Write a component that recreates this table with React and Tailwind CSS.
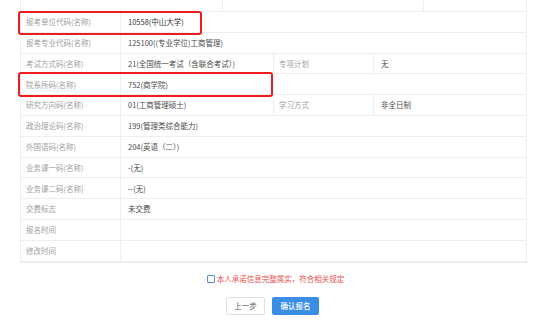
import React from "react";

const rows = [
  { label: "报考单位代码(名称)", value: "10558(中山大学)", strong: true },
  { label: "报考专业代码(名称)", value: "125100((专业学位)工商管理)" },
  {
    label: "考试方式码(名称)",
    value: "21(全国统一考试（含联合考试）)",
    label2: "专项计划",
    value2: "无",
  },
  { label: "院系所码(名称)", value: "752(商学院)" },
  {
    label: "研究方向码(名称)",
    value: "01(工商管理硕士)",
    label2: "学习方式",
    value2: "非全日制",
  },
  { label: "政治理论码(名称)", value: "199(管理类综合能力)" },
  { label: "外国语码(名称)", value: "204(英语（二）)" },
  { label: "业务课一码(名称)", value: "-(无)" },
  { label: "业务课二码(名称)", value: "--(无)" },
  { label: "交费标志", value: "未交费" },
  { label: "报名时间", value: "" },
  { label: "修改时间", value: "" },
];

const Row = ({ row }) => {
  return (
    <div className="flex h-[20.8px] border-b border-[#eceef2] items-stretch">
      <div className="w-[100px] shrink-0 flex items-center pl-[5px] text-[#a0a0a0] border-r border-[#eceef2]">
        {row.label}
      </div>
      {row.label2 ? (
        <>
          <div className="w-[153px] shrink-0 flex items-center pl-[7px] text-[#4a4a4a] border-r border-[#eceef2]">
            {row.value}
          </div>
          <div className="w-[100px] shrink-0 flex items-center pl-[5px] text-[#a0a0a0] border-r border-[#eceef2]">
            {row.label2}
          </div>
          <div className="flex-1 flex items-center pl-[7px] text-[#4a4a4a]">
            {row.value2}
          </div>
        </>
      ) : (
        <div
          className={
            "flex-1 flex items-center pl-[7px] " +
            (row.strong ? "text-[#333]" : "text-[#4a4a4a]")
          }
        >
          {row.value}
        </div>
      )}
    </div>
  );
};

export default function App() {
  return (
    <div
      className="w-[553px] h-[330px] bg-white overflow-hidden text-[7.5px] leading-none"
      style={{ fontFamily: '"Noto Sans CJK SC", "Noto Sans", sans-serif' }}
    >
      <div className="relative ml-[20px] w-[507px]">
        {/* table */}
        <div className="border-l border-r border-b border-[#eceef2]">
          <div className="flex h-[12px] border-b border-[#eceef2]">
            <div className="w-[202px] border-r border-[#eceef2]" />
            <div className="w-[201px] border-r border-[#eceef2]" />
            <div className="flex-1" />
          </div>
          {rows.map((row) => (
            <Row key={row.label} row={row} />
          ))}
        </div>

        {/* red highlight boxes */}
        <div className="absolute left-[-2px] top-[11px] w-[184px] h-[24px] border-[2.5px] border-[#ee1c1c] rounded-[3px]" />
        <div className="absolute left-[-2px] top-[72px] w-[255px] h-[25px] border-[2.5px] border-[#ee1c1c] rounded-[3px]" />
      </div>

      {/* agreement */}
      <div className="flex items-center justify-center mt-[12px] ml-[-2px]">
        <span className="w-[8px] h-[8px] border border-[#5b8fd6] rounded-[1px] mr-[2px] bg-white" />
        <span className="text-[#e9514f]">本人承诺信息完整属实，符合相关规定</span>
      </div>

      {/* buttons */}
      <div className="flex justify-center gap-[7px] mt-[14px] ml-[-8px]">
        <button className="w-[39px] h-[18px] border border-[#dcdfe6] rounded-[2px] bg-white text-[#555]">
          上一步
        </button>
        <button className="w-[47px] h-[18px] rounded-[2px] bg-[#3a8ee6] text-white font-medium">
          确认报名
        </button>
      </div>
    </div>
  );
}
